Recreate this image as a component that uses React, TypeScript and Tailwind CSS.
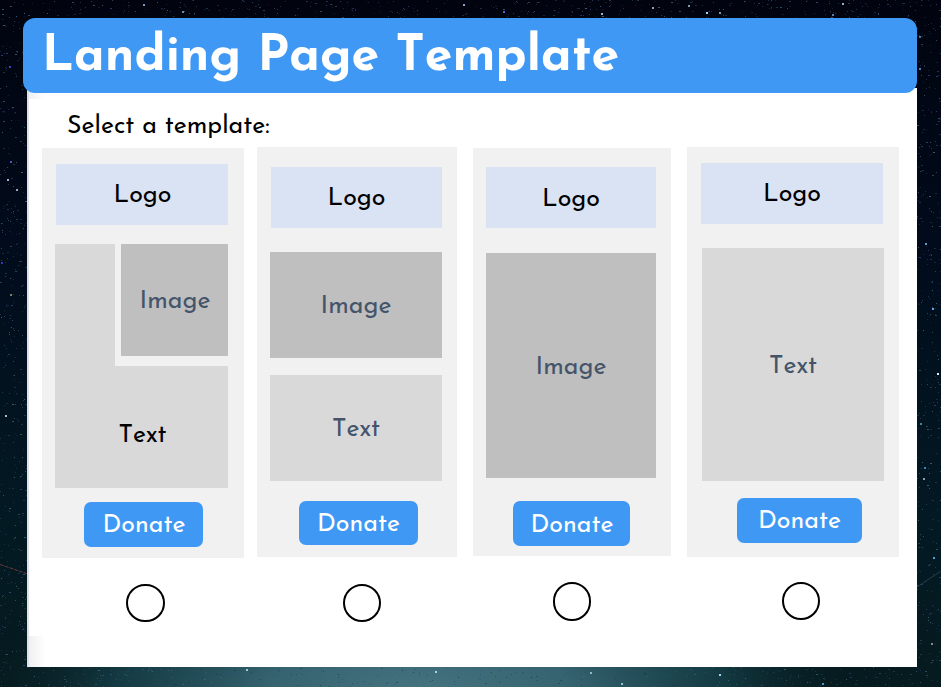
import clsx from "clsx";

type Box = { label: string; className: string };

type Template = {
  id: string;
  column: string;
  card: string;
  logo: string;
  boxes?: Box[];
  button: string;
  radio: string;
};

const templates: Template[] = [
  {
    id: "wrapped",
    column: "w-[202px] pt-px",
    card: "h-[410px] pt-4 pl-[13px]",
    logo: "ml-px w-[172px] pl-px",
    button: "mt-[14px] ml-[29px] w-[119px] h-[45px] pl-px",
    radio: "mt-[26px] ml-[84px] w-[39px] h-[38px]",
  },
  {
    id: "stacked",
    column: "w-[200px] ml-[13px]",
    card: "h-[410px] pt-5 pl-[13px]",
    logo: "ml-px w-[171px]",
    boxes: [
      { label: "Image", className: "mt-6 w-[172px] h-[106px] bg-[#bfbfbf]" },
      { label: "Text", className: "mt-[17px] w-[172px] h-[106px] bg-[#d9d9d9]" },
    ],
    button: "mt-5 ml-[29px] w-[119px] h-[44px]",
    radio: "mt-[27px] ml-[86px] w-[38px] h-[38px]",
  },
  {
    id: "image",
    column: "w-[198px] ml-4 pt-px",
    card: "h-[408px] pt-[19px] pl-[13px]",
    logo: "w-[170px] pt-[2px]",
    boxes: [{ label: "Image", className: "mt-[25px] w-[170px] h-[225px] bg-[#bfbfbf]" }],
    button: "mt-[23px] ml-[27px] w-[117px] h-[45px] pt-[2px] pl-px",
    radio: "mt-[26px] ml-20 w-[38px] h-[39px]",
  },
  {
    id: "text",
    column: "w-[212px] ml-4",
    card: "h-[410px] pt-4 pl-[14px]",
    logo: "w-[182px]",
    boxes: [{ label: "Text", className: "mt-6 ml-px w-[182px] h-[233px] bg-[#d9d9d9]" }],
    button: "mt-[17px] ml-9 w-[125px] h-[45px]",
    radio: "mt-[25px] ml-[95px] w-[38px] h-[38px]",
  },
];

// small seeded generator so the sky is the same on every render
function makeStars(count: number) {
  let seed = 4217;
  const rand = () => {
    seed = (seed * 16807) % 2147483647;
    return seed / 2147483647;
  };
  const colors = ["#2b3f66", "#254c60", "#3b4c86", "#4b6170", "#1d2f52", "#36687a"];
  return Array.from({ length: count }, () => ({
    x: Math.floor(rand() * 941),
    y: Math.floor(rand() * 687),
    w: rand() > 0.75 ? 2 : 1,
    fill: colors[Math.floor(rand() * colors.length)],
    opacity: 0.25 + rand() * 0.65,
  }));
}

const stars = makeStars(14000);

const brightStars = [
  [9, 66, "#4444c8"], [10, 161, "#4a5cc0"], [7, 179, "#9fb4d8"], [16, 189, "#91a8c8"],
  [1, 262, "#3434b8"], [10, 294, "#7d7a68"], [5, 415, "#a4b7c0"], [143, 4, "#7d98c0"],
  [182, 11, "#7888b4"], [463, 4, "#8ca0cc"], [503, 11, "#5262e0"], [601, 13, "#8fb6e0"],
  [652, 7, "#8aa4b4"], [688, 5, "#7d98b0"], [706, 12, "#8fdcff"], [719, 12, "#8099b0"],
  [842, 3, "#94b4c4"], [832, 14, "#5682a8"], [919, 36, "#4a7894"], [919, 68, "#4b7cc4"],
  [925, 243, "#5c9cc0"], [932, 308, "#5fa0ff"], [937, 373, "#dcecff"], [920, 423, "#3c88a4"],
  [924, 467, "#3a87c0"], [923, 478, "#8f9cac"], [933, 557, "#4ca0e8"], [931, 643, "#8a8890"],
  [719, 674, "#9bd5f0"], [822, 683, "#5298c0"], [246, 669, "#9acbd4"], [435, 671, "#a5d7df"],
  [590, 672, "#83bcd4"], [621, 683, "#8dc3d0"],
] as const;

function Sky() {
  return (
    <svg className="absolute inset-0 -z-10" width="941" height="687" viewBox="0 0 941 687">
      <defs>
        <linearGradient id="night" x1="0" y1="0" x2="0" y2="1">
          <stop offset="0" stopColor="#01040f" />
          <stop offset="0.35" stopColor="#010b1b" />
          <stop offset="0.75" stopColor="#031923" />
          <stop offset="1" stopColor="#061b1f" />
        </linearGradient>
        <radialGradient id="glow" gradientUnits="userSpaceOnUse" cx="0" cy="0" r="1" gradientTransform="translate(420 690) scale(430 150)">
          <stop offset="0" stopColor="#457480" />
          <stop offset="0.35" stopColor="#35636f" />
          <stop offset="0.7" stopColor="#194650" stopOpacity="0.75" />
          <stop offset="1" stopColor="#082328" stopOpacity="0" />
        </radialGradient>
      </defs>
      <rect width="941" height="687" fill="url(#night)" />
      <rect y="500" width="941" height="187" fill="url(#glow)" />
      {stars.map((s, i) => (
        <rect key={i} x={s.x} y={s.y} width={s.w} height="1" fill={s.fill} opacity={s.opacity} />
      ))}
      {brightStars.map(([x, y, fill]) => (
        <rect key={`${x}-${y}`} x={x} y={y} width="2" height="2" fill={fill} />
      ))}
      <path d="M0 564.5L28 574" stroke="#a84f50" strokeWidth="0.8" strokeDasharray="4 1" opacity="0.75" />
      <path d="M917 587L941 571" stroke="#30505a" strokeWidth="1" opacity="0.7" />
    </svg>
  );
}

function Label({ text, className }: { text: string; className?: string }) {
  return <span className={clsx("text-[25px] leading-[30px]", className)}>{text}</span>;
}

// image in the top right corner with the text block running around it
function WrappedContent() {
  return (
    <div className="mt-[19px] w-[173px] h-[244px] flex flex-col">
      <div className="flex h-[122px]">
        <div className="w-[60px] bg-[#d9d9d9]" />
        <div className="ml-[6px] w-[107px] h-[112px] bg-[#bfbfbf] flex items-center justify-center">
          <Label text="Image" className="text-[#44546a] mt-[3px] ml-px" />
        </div>
      </div>
      <div className="h-[122px] bg-[#d9d9d9] flex items-center justify-center">
        <Label text="Text" className="text-black mt-[17px] ml-[2px]" />
      </div>
    </div>
  );
}

function TemplateOption({ template }: { template: Template }) {
  return (
    <label className={clsx("block shrink-0", template.column)}>
      <div className={clsx("bg-[#f1f1f1]", template.card)}>
        <div className={clsx("h-[61px] bg-[#dae3f3] flex items-center justify-center", template.logo)}>
          <Label text="Logo" className="text-black mt-[3px]" />
        </div>
        {template.boxes ? (
          template.boxes.map((box) => (
            <div key={box.label} className={clsx("flex items-center justify-center", box.className)}>
              <Label text={box.label} className="text-[#44546a] mt-1" />
            </div>
          ))
        ) : (
          <WrappedContent />
        )}
        <button type="button" className={clsx("rounded-[7px] bg-[#3f98f3] flex items-center justify-center", template.button)}>
          <Label text="Donate" className="text-white mt-[3px]" />
        </button>
      </div>
      <input
        type="radio"
        name="template"
        value={template.id}
        className={clsx("block appearance-none rounded-full border-2 border-black bg-white", template.radio)}
      />
    </label>
  );
}

export default function App() {
  return (
    <div className="relative isolate w-[941px] h-[687px] overflow-hidden pt-[18px] pl-[23px] font-['Josefin_Sans','Lato',sans-serif] [font-kerning:none]">
      <Sky />
      <header className="relative z-10 w-[894px] h-[75px] rounded-[12px] bg-[#3f98f3] pl-[19px] pt-2">
        <h1 className="text-[50px] leading-[64px] font-bold text-white whitespace-nowrap">
          Landing Page Template
        </h1>
      </header>
      <main className="-mt-[5px] ml-1 w-[890px] h-[579px] bg-white border-l-2 border-[#dfe1e8]">
        <div className="h-[11px] w-4 bg-linear-to-r from-[#f0f0f2] to-white" />
        <h2 className="h-[48px] pt-[13px] pl-[38px] text-[25px] leading-[30px] text-black">
          Select a template:
        </h2>
        <div className="flex h-[489px] pl-[13px]">
          {templates.map((template) => (
            <TemplateOption key={template.id} template={template} />
          ))}
        </div>
        <div className="h-[31px] w-4 bg-linear-to-r from-[#f0f0f2] to-white" />
      </main>
    </div>
  );
}
